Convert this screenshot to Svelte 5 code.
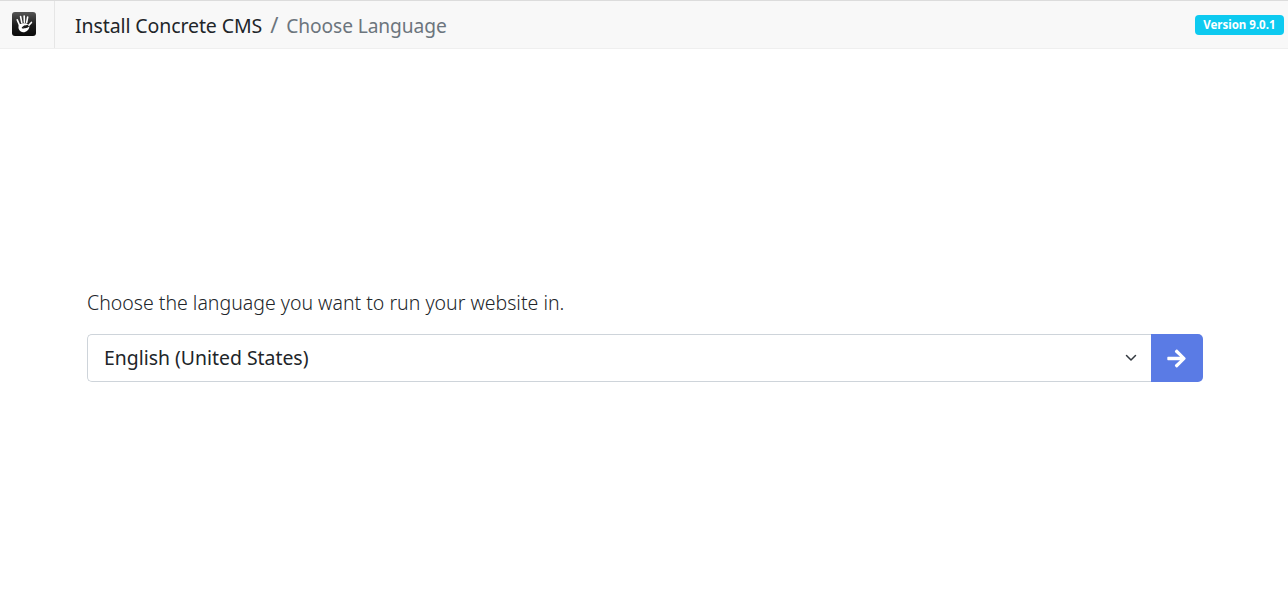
<script>
  let language = $state('en_US');
</script>

<header class="topbar">
  <div class="logo-cell">
    <svg class="logo" viewBox="0 0 24 24" width="24" height="24" aria-label="Concrete CMS">
      <defs>
        <linearGradient id="logoBg" x1="0" y1="0" x2="0" y2="1">
          <stop offset="0" stop-color="#555" />
          <stop offset="0.55" stop-color="#1c1c1c" />
          <stop offset="1" stop-color="#0a0a0a" />
        </linearGradient>
      </defs>
      <rect width="24" height="24" rx="3" fill="url(#logoBg)" />
      <g transform="translate(-1 -1) scale(1.08)">
        <g fill="none" stroke="#fff" stroke-linecap="round" stroke-width="1.500">
          <path d="M5.800 8.200 7.800 12.800" />
          <path d="M8.900 5.200 10 10.800" />
          <path d="M12.200 4.600 12.400 10.400" />
          <path d="M15.400 5.600 14.500 10.800" />
          <path d="M18.900 10.600 16.600 13.200" />
        </g>
        <path d="M7.400 12.600c2-1.500 6.800-2 9.300.2-1.300 0-2.800.3-3.800.7-1.500.6-2 1.700-1 2.200 1.500.7 3.600-.2 5.200-1.600-.3 3.200-2.800 5.600-5.700 5.600-3.400 0-5.500-3.400-4-7.100Z" fill="#fff" />
        <path d="M9.800 15.800c.7-1.300 2-2.200 3.400-2.500-1.400.8-1.800 2.200-.9 2.900-.9.200-1.800 0-2.500-.4Z" fill="#1c1c1c" />
      </g>
    </svg>
  </div>
  <div class="crumbs">
    <span class="title">Install Concrete CMS</span>
    <span class="sep">/</span>
    <span class="step">Choose Language</span>
  </div>
  <span class="badge">Version 9.0.1</span>
</header>

<main class="page">
  <label class="prompt" for="lang">Choose the language you want to run your website in.</label>
  <div class="input-group">
    <div class="select-wrap">
      <select id="lang" bind:value={language}>
        <option value="en_US">English (United States)</option>
      </select>
      <svg class="chevron" viewBox="0 0 12 8" width="12" height="8" aria-hidden="true">
        <path d="m1.500 1.500 4.500 4.500 4.500-4.500" fill="none" stroke="#343a40" stroke-width="1.500" stroke-linecap="round" stroke-linejoin="round" />
      </svg>
    </div>
    <button class="go" type="button" aria-label="Continue">
      <svg viewBox="0 0 448 512" width="19" height="21" aria-hidden="true">
        <path fill="#fff" d="M190.500 66.900l22.200-22.200c9.400-9.400 24.600-9.400 33.900 0L441 239c9.400 9.400 9.400 24.600 0 33.900L246.600 467.300c-9.400 9.400-24.600 9.400-33.900 0l-22.200-22.200c-9.500-9.500-9.300-25 .4-34.300L311.400 296H24c-13.300 0-24-10.700-24-24v-32c0-13.300 10.700-24 24-24h287.400L190.900 101.200c-9.800-9.300-10-24.800-.4-34.300z" />
      </svg>
    </button>
  </div>
</main>

<style>
  :global(body) {
    margin: 0;
    background: #fff;
    font-family: "Noto Sans", "Open Sans", sans-serif;
    color: #212529;
  }

  .topbar {
    display: flex;
    align-items: center;
    height: 47px;
    background: #f8f8f8;
    border-top: 1px solid #dcdcdc;
    border-bottom: 1px solid #efefef;
  }

  .logo-cell {
    display: flex;
    align-items: center;
    justify-content: center;
    box-sizing: border-box;
    width: 55px;
    height: 100%;
    padding: 0 7px 2px 0;
    border-right: 1px solid #e6e6e6;
  }

  .logo {
    display: block;
  }

  .crumbs {
    display: flex;
    align-items: baseline;
    margin: 0 0 2px 20px;
    font-size: 19.500px;
    letter-spacing: -0.1px;
  }

  .title {
    color: #212529;
  }

  .sep {
    margin: 0 8px;
    color: #6c757d;
    font-size: 22px;
  }

  .step {
    color: #6c757d;
    font-size: 19.200px;
  }

  .badge {
    margin-left: auto;
    margin-right: 4px;
    padding: 2px 8.500px 3px;
    border-radius: 4px;
    background: #0dcaf0;
    color: #fff;
    font-size: 11.500px;
    font-weight: 700;
    line-height: 15px;
  }

  .page {
    display: flex;
    flex-direction: column;
    padding: 240px 85px 0 87px;
  }

  .prompt {
    font-size: 19.500px;
    font-weight: 300;
    line-height: 28px;
    margin-bottom: 17px;
    color: #212529;
  }

  .input-group {
    display: flex;
    height: 48px;
  }

  .select-wrap {
    position: relative;
    flex: 1;
  }

  select {
    appearance: none;
    box-sizing: border-box;
    display: block;
    width: 100%;
    height: 100%;
    padding: 0 48px 2px 16px;
    border: 1px solid #ced4da;
    border-right: 0;
    border-radius: 5px 0 0 5px;
    background: #fff;
    color: #212529;
    font: inherit;
    font-size: 19.400px;
    outline: none;
  }

  .chevron {
    position: absolute;
    top: 20px;
    right: 14px;
    pointer-events: none;
  }

  .go {
    display: flex;
    align-items: center;
    justify-content: center;
    width: 52px;
    padding: 0 2px 0 0;
    border: 0;
    border-radius: 0 5px 5px 0;
    background: #5a7be5;
  }
</style>
